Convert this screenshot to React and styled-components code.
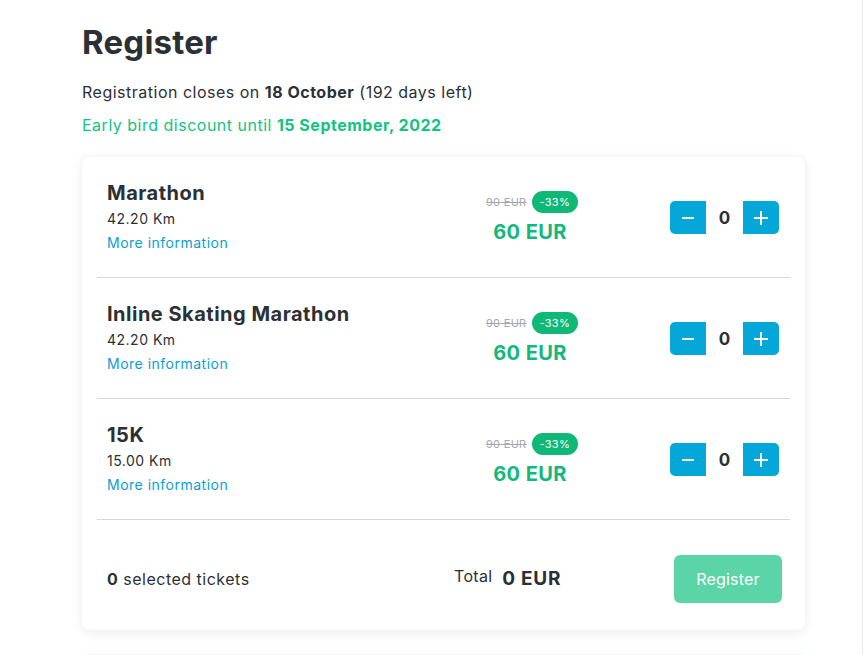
import React, { useState } from 'react';
import styled, { createGlobalStyle } from 'styled-components';

const GlobalStyle = createGlobalStyle`
    html, body {
        margin: 0;
        padding: 0;
        background: #fff;
        font-family: Inter, "Noto Sans", sans-serif;
        color: #2d3436;
    }
`;

const Page = styled.div`
    width: 862px;
    height: 655px;
    overflow: hidden;
    border-right: 1px solid #ececec;
    box-sizing: content-box;
`;

const Content = styled.div`
    width: 723px;
    padding: 22px 0 0 82px;
`;

const Title = styled.h1`
    margin: 0;
    font-size: 33px;
    font-weight: 700;
    line-height: 40px;
    letter-spacing: 0.2px;
    color: #2b3035;
`;

const Info = styled.p`
    margin: 0;
    font-size: 16px;
    line-height: 20px;
    letter-spacing: 0.5px;
    color: ${(p) => p.color || '#2b3035'};
    margin-top: ${(p) => p.top}px;
    & b { font-weight: 700; }
`;

const Card = styled.div`
    margin-top: 22px;
    background: #fff;
    border-radius: 8px;
    box-shadow: 0 2px 12px rgba(0, 0, 0, 0.09);
    padding: 0 15px;
`;

const Row = styled.div`
    display: grid;
    grid-template-columns: 1fr 140px 180px;
    align-items: center;
    box-sizing: border-box;
    height: ${(p) => p.height}px;
    border-bottom: ${(p) => (p.last ? 'none' : '1px solid #d6d9dc')};
    padding: ${(p) => (p.last ? '7px 10px 0' : '0 10px')};
`;

const EventInfo = styled.div`
    display: flex;
    flex-direction: column;
`;

const EventName = styled.div`
    font-size: 20px;
    font-weight: 700;
    line-height: 24px;
    letter-spacing: 0.5px;
    color: #2b3035;
`;

const Distance = styled.div`
    font-size: 14px;
    line-height: 18px;
    margin-top: 5px;
    letter-spacing: 0.5px;
    color: #2b3035;
`;

const MoreLink = styled.a`
    font-size: 14px;
    line-height: 20px;
    margin-top: 5px;
    letter-spacing: 0.5px;
    color: #0aa0d2;
    text-decoration: none;
    cursor: pointer;
`;

const Price = styled.div`
    display: flex;
    flex-direction: column;
    align-items: center;
`;

const PriceTop = styled.div`
    display: flex;
    align-items: center;
    gap: 5px;
    margin-left: 4px;
`;

const OldPrice = styled.span`
    font-size: 11px;
    letter-spacing: 0.3px;
    color: #a4a9ad;
    text-decoration: line-through;
`;

const Badge = styled.span`
    background: #10b877;
    color: #fff;
    font-size: 11px;
    line-height: 14px;
    letter-spacing: 0.3px;
    padding: 4px 8px;
    border-radius: 12px;
`;

const NewPrice = styled.div`
    font-size: 20px;
    font-weight: 700;
    letter-spacing: 0.4px;
    color: #13b97a;
    line-height: 24px;
    margin-top: 7px;
`;

const Stepper = styled.div`
    display: flex;
    align-items: center;
    justify-self: end;
    padding-top: 1px;
    margin-right: 1px;
`;

const StepButton = styled.button`
    width: 36px;
    height: 33px;
    border: none;
    background: #05a6d8;
    color: #fff;
    display: flex;
    align-items: center;
    justify-content: center;
    padding: 0;
    cursor: pointer;
    border-radius: ${(p) => (p.side === 'left' ? '5px 0 0 5px' : '0 5px 5px 0')};
`;

const Count = styled.span`
    width: 37px;
    text-align: center;
    font-size: 17px;
    font-weight: 700;
    color: #2b3035;
`;

const Selected = styled.div`
    font-size: 16px;
    letter-spacing: 0.5px;
    color: #2b3035;
    & b { font-weight: 700; }
`;

const Total = styled.div`
    display: flex;
    align-items: baseline;
    gap: 10px;
    margin-left: -6px;
    color: #2b3035;
`;

const TotalLabel = styled.span`
    font-size: 16px;
    letter-spacing: 0.3px;
    position: relative;
    top: -3px;
`;

const TotalValue = styled.span`
    font-size: 19px;
    font-weight: 700;
    letter-spacing: 0.7px;
`;

const RegisterButton = styled.button`
    justify-self: end;
    width: 108px;
    height: 48px;
    border: none;
    border-radius: 6px;
    background: #5bd4a7;
    color: #fff;
    font-family: Inter, sans-serif;
    font-size: 16px;
    letter-spacing: 0.2px;
    cursor: pointer;
    margin-right: -2px;
`;

const Banner = styled.div`
    margin: 24px 0 0 4px;
    height: 20px;
    background: #e9fbf4;
    border-radius: 4px;
`;

const Minus = () => (
    <svg width="16" height="16" viewBox="0 0 16 16">
        <path d="M2 8h12" stroke="#fff" strokeWidth="2" />
    </svg>
);

const Plus = () => (
    <svg width="16" height="16" viewBox="0 0 16 16">
        <path d="M1 8h14M8 1v14" stroke="#fff" strokeWidth="2" />
    </svg>
);

const events = [
    { name: 'Marathon', distance: '42.20 Km' },
    { name: 'Inline Skating Marathon', distance: '42.20 Km' },
    { name: '15K', distance: '15.00 Km' },
];

const App = () => {
    const [counts, setCounts] = useState([0, 0, 0]);

    const change = (i, d) => {
        setCounts((c) => c.map((v, j) => (j === i ? Math.max(0, v + d) : v)));
    };

    const selected = counts.reduce((a, b) => a + b, 0);

    return (
        <Page>
            <GlobalStyle />
            <Content>
                <Title>Register</Title>
                <Info top={20}>
                    Registration closes on <b>18 October</b> (192 days left)
                </Info>
                <Info top={13} color="#12c47f">
                    Early bird discount until <b>15 September, 2022</b>
                </Info>
                <Card>
                    {events.map((ev, i) => (
                        <Row key={ev.name} height={121}>
                            <EventInfo>
                                <EventName>{ev.name}</EventName>
                                <Distance>{ev.distance}</Distance>
                                <MoreLink>More information</MoreLink>
                            </EventInfo>
                            <Price>
                                <PriceTop>
                                    <OldPrice>90 EUR</OldPrice>
                                    <Badge>-33%</Badge>
                                </PriceTop>
                                <NewPrice>60 EUR</NewPrice>
                            </Price>
                            <Stepper>
                                <StepButton side="left" onClick={() => change(i, -1)}>
                                    <Minus />
                                </StepButton>
                                <Count>{counts[i]}</Count>
                                <StepButton side="right" onClick={() => change(i, 1)}>
                                    <Plus />
                                </StepButton>
                            </Stepper>
                        </Row>
                    ))}
                    <Row height={110} last>
                        <Selected>
                            <b>{selected}</b> selected tickets
                        </Selected>
                        <Total>
                            <TotalLabel>Total</TotalLabel>
                            <TotalValue>{selected * 60} EUR</TotalValue>
                        </Total>
                        <RegisterButton>Register</RegisterButton>
                    </Row>
                </Card>
                <Banner />
            </Content>
        </Page>
    );
};

export default App;
